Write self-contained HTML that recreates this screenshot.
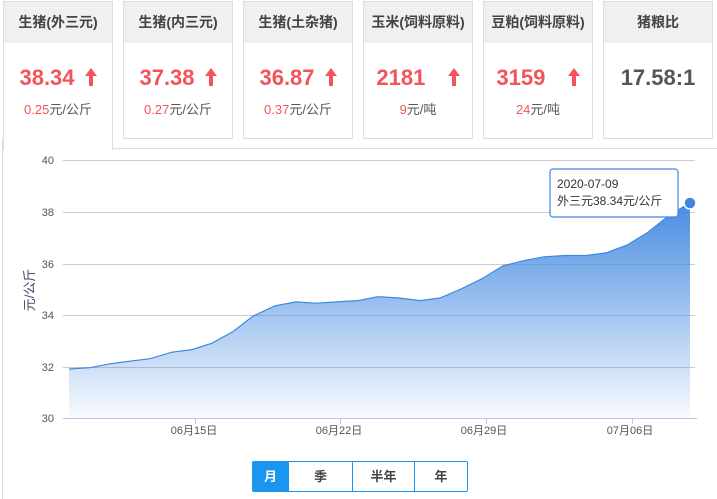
<!DOCTYPE html>
<html><head><meta charset="utf-8"><style>
*{margin:0;padding:0;box-sizing:border-box}
body{width:717px;height:499px;background:#fff;font-family:"Liberation Sans","Noto Sans CJK SC",sans-serif;position:relative;overflow:hidden}
.card{position:absolute;top:1px;width:110px;height:138px;border:1px solid #ddd;background:#fff;text-align:center}
.card .h{height:41px;background:#f0f0f0;line-height:41px;font-size:14px;color:#444;font-weight:bold}
.card .v{margin-top:22px;font-size:22px;font-weight:bold;color:#f5535b;line-height:26px;white-space:nowrap}
.card .v svg{margin-left:10px;vertical-align:-1px}
.card .s{margin-top:8px;font-size:13px;color:#555}
.card .s b{font-weight:normal;color:#f5535b}
.btns{position:absolute;left:252px;top:461px;width:216px;height:31px;border:1px solid #1a96f0;border-radius:2px;display:flex;font-size:13px;font-weight:bold;color:#444}
.btns div{text-align:center;line-height:29px;border-left:1px solid #1a96f0}
</style></head><body>
<div style="position:absolute;left:112px;top:148px;width:605px;border-top:1px solid #ddd"></div>
<div style="position:absolute;left:2px;top:138px;height:361px;border-left:1px solid #ddd"></div>
<div class="card" style="left:3px;height:149px;border-bottom:none"><div class="h">生猪(外三元)</div><div class="v">38.34<svg width="12" height="18" viewBox="0 0 12 18"><path d="M6,0 L12,8 L8,8 L8,18 L4,18 L4,8 L0,8Z" fill="#f5535b"/></svg></div><div class="s"><b>0.25</b>元/公斤</div></div>
<div class="card" style="left:123px"><div class="h">生猪(内三元)</div><div class="v">37.38<svg width="12" height="18" viewBox="0 0 12 18"><path d="M6,0 L12,8 L8,8 L8,18 L4,18 L4,8 L0,8Z" fill="#f5535b"/></svg></div><div class="s"><b>0.27</b>元/公斤</div></div>
<div class="card" style="left:243px"><div class="h">生猪(土杂猪)</div><div class="v">36.87<svg width="12" height="18" viewBox="0 0 12 18"><path d="M6,0 L12,8 L8,8 L8,18 L4,18 L4,8 L0,8Z" fill="#f5535b"/></svg></div><div class="s"><b>0.37</b>元/公斤</div></div>
<div class="card" style="left:363px"><div class="h">玉米(饲料原料)</div><div class="v">2181 &nbsp;<svg width="12" height="18" viewBox="0 0 12 18"><path d="M6,0 L12,8 L8,8 L8,18 L4,18 L4,8 L0,8Z" fill="#f5535b"/></svg></div><div class="s"><b>9</b>元/吨</div></div>
<div class="card" style="left:483px"><div class="h">豆粕(饲料原料)</div><div class="v">3159 &nbsp;<svg width="12" height="18" viewBox="0 0 12 18"><path d="M6,0 L12,8 L8,8 L8,18 L4,18 L4,8 L0,8Z" fill="#f5535b"/></svg></div><div class="s"><b>24</b>元/吨</div></div>
<div class="card" style="left:603px"><div class="h">猪粮比</div><div class="v" style="color:#555">17.58:1</div></div>
<svg style="position:absolute;left:0;top:0" width="717" height="499">
<defs><linearGradient id="g" x1="0" y1="0" x2="0" y2="1"><stop offset="0" stop-color="#3f87e0" stop-opacity="0.95"/><stop offset="1" stop-color="#3f87e0" stop-opacity="0.04"/></linearGradient></defs>
<g stroke="#ccc" stroke-width="1">
<line x1="63" y1="160.5" x2="695" y2="160.5"/><line x1="63" y1="212.5" x2="695" y2="212.5"/><line x1="63" y1="264.5" x2="695" y2="264.5"/><line x1="63" y1="315.5" x2="695" y2="315.5"/><line x1="63" y1="367.5" x2="695" y2="367.5"/></g>
<g font-size="11" fill="#555" text-anchor="end"><text x="54" y="164">40</text><text x="54" y="216">38</text><text x="54" y="268">36</text><text x="54" y="319">34</text><text x="54" y="371">32</text><text x="54" y="422">30</text></g>
<text transform="translate(34,290) rotate(-90)" font-size="13" fill="#446" text-anchor="middle">元/公斤</text>
<path d="M69,369 L90,367.7 L110,363.8 L130,361.2 L150,358.7 L172,352.2 L192,349.6 L212,343.2 L233,331.6 L253,316.1 L275,305.8 L296,301.9 L316,303.2 L337,301.9 L358,300.6 L378,296.7 L399,298 L420,300.6 L440,298 L461,289 L482,278.7 L503,265.8 L524,260.6 L544,256.8 L565,255.5 L586,255.5 L606,252.9 L627,245.1 L648,232.2 L669,215.5 L690,202.8 L690,418 L69,418Z" fill="url(#g)"/>
<path d="M69,369 L90,367.7 L110,363.8 L130,361.2 L150,358.7 L172,352.2 L192,349.6 L212,343.2 L233,331.6 L253,316.1 L275,305.8 L296,301.9 L316,303.2 L337,301.9 L358,300.6 L378,296.7 L399,298 L420,300.6 L440,298 L461,289 L482,278.7 L503,265.8 L524,260.6 L544,256.8 L565,255.5 L586,255.5 L606,252.9 L627,245.1 L648,232.2 L669,215.5 L690,202.8" fill="none" stroke="#3f87e0" stroke-width="1.2"/>
<line x1="63" y1="418.5" x2="697" y2="418.5" stroke="#b8c8dc"/>
<g stroke="#b8c8dc"><line x1="195.5" y1="418" x2="195.5" y2="424"/><line x1="340.5" y1="418" x2="340.5" y2="424"/><line x1="486.5" y1="418" x2="486.5" y2="424"/><line x1="632.5" y1="418" x2="632.5" y2="424"/></g>
<g font-size="11" fill="#555" text-anchor="middle"><text x="194" y="434">06月15日</text><text x="339" y="434">06月22日</text><text x="484" y="434">06月29日</text><text x="630" y="434">07月06日</text></g>
<circle cx="690" cy="203" r="6" fill="#3f87e0" stroke="#fff" stroke-width="1.5"/>
<rect x="550" y="169" width="128" height="48" rx="3" fill="#fff" stroke="#3f87e0" stroke-width="1.2"/>
<text x="557" y="188" font-size="12" fill="#333">2020-07-09</text>
<text x="557" y="205" font-size="12" fill="#333">外三元38.34元/公斤</text>
</svg>
<div class="btns"><div style="width:35px;background:#1a96f0;color:#fff;border-left:none">月</div><div style="width:64px">季</div><div style="width:62px">半年</div><div style="width:53px">年</div></div>
</body></html>
